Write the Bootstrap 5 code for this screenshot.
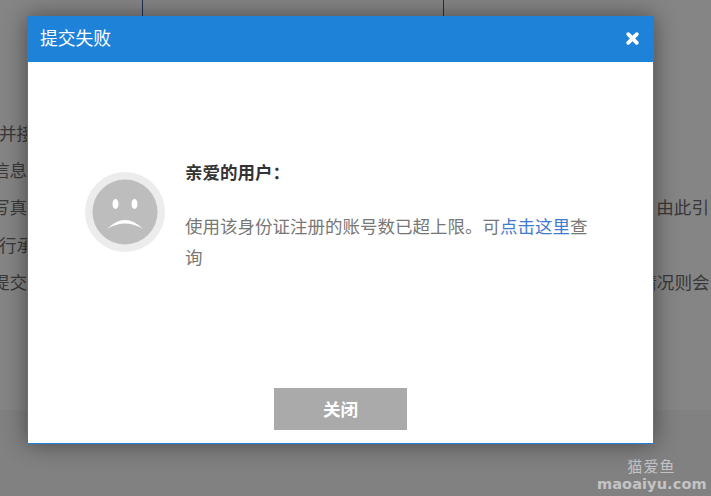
<!DOCTYPE html>
<html lang="zh">
<head>
<meta charset="utf-8">
<title>提交失败</title>
<link href="https://cdn.jsdelivr.net/npm/bootstrap@5.3.0/dist/css/bootstrap.min.css" rel="stylesheet">
<style>
html,body{height:100%;}
body{overflow:hidden;background:#fff;color:#333;font-family:"Liberation Sans","Noto Sans CJK SC",sans-serif;}
.page-bg{height:496px;overflow:hidden;position:relative;}
.top-cells{height:16px;width:302px;margin-left:142px;border-left:1px solid #3d5fa8;border-right:1px solid #3d5fa8;}
.bg-lines{padding-top:99.5px;font-size:17.6px;color:#6e6e6e;}
.bg-line{height:37.4px;line-height:37.4px;white-space:nowrap;overflow:hidden;}
.page-foot{position:absolute;left:0;right:0;bottom:0;height:86px;background:#f7f7f7;}
.dim{position:absolute;inset:0;background:rgba(0,0,0,.48);}
.dialog-box{position:absolute;left:27px;top:16px;width:627px;height:428px;background:#fff;border:1px solid #1e82d9;border-top:0;border-radius:0;box-shadow:0 0 22px rgba(0,0,0,.45);}
.dialog-head{height:46px;background:#1e82d9;color:#fff;padding:0 13px 0 13px;font-size:17.8px;margin:0 -1px;}
.dialog-x{width:15px;height:15px;display:block;margin-top:-2px;margin-right:1px;}
.dialog-main{flex:1 1 auto;padding:96px 50px 0 56px;gap:19px;}
.sad-icon{width:82px;height:82px;flex:0 0 82px;margin-top:13px;}
.msg-area{font-size:17.5px;color:#777;width:412px;}
.msg-title{font-weight:700;color:#333;margin-bottom:23.5px;line-height:30px;}
.msg-text{line-height:31px;margin:0;}
.msg-text a{color:#3f7bd0;text-decoration:none;}
.dialog-foot{padding-bottom:13px;}
.close-action{width:133px;height:42px;background:#aaa;color:#fff;font-size:17.6px;font-weight:700;border:0;border-radius:0;padding:2px 0 0;}
.close-action:hover{background:#aaa;color:#fff;}
.site-mark{position:absolute;right:8px;top:456px;width:106px;text-align:center;color:#c4c4c4;font-family:"DejaVu Sans","Noto Sans CJK SC",sans-serif;}
.mark-cn{font-size:15px;line-height:19px;letter-spacing:1.2px;padding-left:3px;font-family:"Noto Sans CJK SC",sans-serif;}
.mark-en{font-size:14.5px;line-height:18px;font-weight:700;letter-spacing:.1px;white-space:nowrap;}
</style>
</head>
<body>
<div class="page-bg">
  <div class="top-cells"></div>
  <div class="bg-lines">
    <div class="bg-line" style="margin-left:-1px">并接</div>
    <div class="bg-line" style="margin-left:-8px">信息</div>
    <div class="bg-line d-flex"><span style="margin-left:-8px">写真</span><span style="margin-left:629px">由此引</span></div>
    <div class="bg-line" style="margin-left:-1px">行承</div>
    <div class="bg-line d-flex"><span style="margin-left:-8px">提交</span><span style="margin-left:612px">情况则会</span></div>
  </div>
  <div class="page-foot"></div>
  <div class="dim"></div>
  <div class="site-mark">
    <div class="mark-cn">猫爱鱼</div>
    <div class="mark-en">maoaiyu.com</div>
  </div>
  <div class="dialog-box d-flex flex-column" role="dialog">
    <div class="dialog-head d-flex align-items-center justify-content-between">
      <span>提交失败</span>
      <svg class="dialog-x" viewBox="0 0 15 15" aria-label="关闭"><path d="M3.2 3.2 L11.8 11.8 M11.8 3.2 L3.2 11.8" stroke="#fff" stroke-width="3.8" stroke-linecap="round"/></svg>
    </div>
    <div class="dialog-main d-flex align-items-start">
      <svg class="sad-icon" viewBox="0 0 82 82" aria-hidden="true">
        <circle cx="41" cy="41" r="40" fill="#ececec"/>
        <circle cx="41" cy="41" r="32.5" fill="#bdbdbd"/>
        <ellipse cx="31.5" cy="33" rx="3" ry="5" fill="#fff"/>
        <ellipse cx="50.5" cy="33" rx="3" ry="5" fill="#fff"/>
        <path d="M23 58 Q41 40 59 58 Q41 47 23 58 Z" fill="#fff"/>
      </svg>
      <div class="msg-area">
        <div class="msg-title">亲爱的用户：</div>
        <p class="msg-text">使用该身份证注册的账号数已超上限。可<a href="#">点击这里</a>查询</p>
      </div>
    </div>
    <div class="dialog-foot d-flex justify-content-center">
      <button type="button" class="btn close-action">关闭</button>
    </div>
  </div>
</div>
<script src="https://cdn.jsdelivr.net/npm/bootstrap@5.3.0/dist/js/bootstrap.bundle.min.js"></script>
</body>
</html>
